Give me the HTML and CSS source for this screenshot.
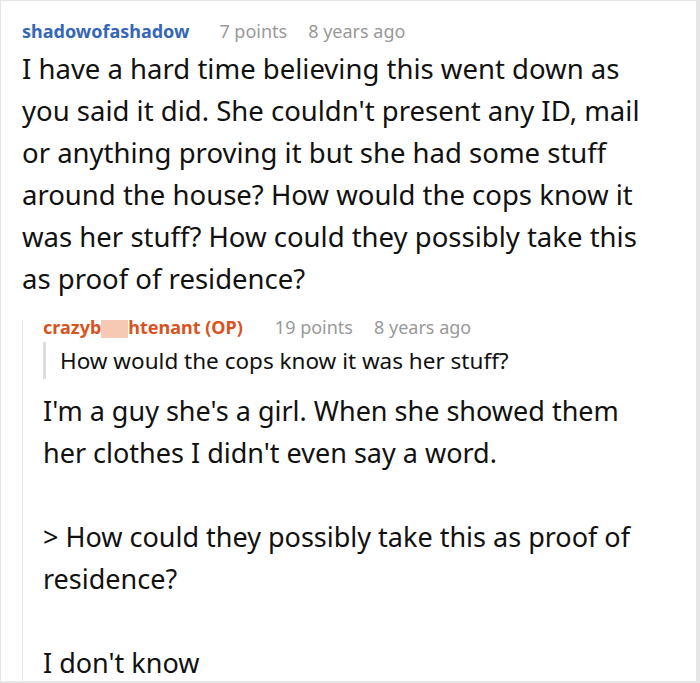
FILE: index.html
```html
<!DOCTYPE html>
<html>
<head>
<meta charset="utf-8">
<link rel="stylesheet" href="styles.css">
</head>
<body>
<div class="page">
  <div class="comment">
    <div class="meta">
      <span class="author">shadowofashadow</span>
      <span class="info">7 points</span>
      <span class="info">8 years ago</span>
    </div>
    <p class="body">I have a hard time believing this went down as you said it did. She couldn't present any ID, mail or anything proving it but she had some stuff around the house? How would the cops know it was her stuff? How could they possibly take this as proof of residence?</p>
    <div class="reply">
      <div class="meta meta-reply">
        <span class="author op">crazyb<span class="blur"></span>htenant (OP)</span>
        <span class="info">19 points</span>
        <span class="info">8 years ago</span>
      </div>
      <blockquote class="quote">How would the cops know it was her stuff?</blockquote>
      <div class="reply-body">
        <p>I'm a guy she's a girl. When she showed them her clothes I didn't even say a word.</p>
        <p>&gt; How could they possibly take this as proof of residence?</p>
        <p class="last">I don't know</p>
      </div>
    </div>
  </div>
</div>
</body>
</html>
```

FILE: styles.css
```css
html, body {
  margin: 0;
  padding: 0;
  background: #ffffff;
}
.page {
  width: 700px;
  height: 683px;
  box-sizing: border-box;
  border: 1px solid #e6e6e6;
  border-right-width: 4px;
  border-bottom-width: 2px;
  overflow: hidden;
  font-family: "Noto Sans", "Open Sans", sans-serif;
  color: #111111;
}
.comment {
  padding: 18px 0 0 21px;
}
.meta {
  display: flex;
  align-items: center;
  height: 24px;
  font-size: 18px;
  white-space: nowrap;
}
.author {
  font-weight: bold;
  color: #3566b8;
  margin-right: 30px;
}
.info {
  color: #999999;
  margin-right: 21px;
}
.body {
  margin: 5px 0 0 0;
  font-size: 27.5px;
  line-height: 42px;
  width: 650px;
}
.reply {
  margin-top: 20px;
  border-left: 1px solid #e4e4e4;
  padding-left: 20px;
}
.meta-reply {
  height: 14px;
}
.op {
  color: #d9531e;
  margin-right: 32px;
}
.blur {
  display: inline-block;
  width: 27px;
  height: 18px;
  vertical-align: middle;
  background: #f6c9b5;
}
.quote {
  margin: 8px 0 0 0;
  border-left: 3px solid #dddddd;
  padding-left: 14px;
  font-size: 22.5px;
  line-height: 37px;
  color: #111111;
}
.reply-body {
  margin-top: 11px;
  font-size: 27px;
  line-height: 42px;
  width: 620px;
}
.reply-body p {
  margin: 0 0 42px 0;
}
.reply-body p.last {
  margin-bottom: -21px;
}
```
